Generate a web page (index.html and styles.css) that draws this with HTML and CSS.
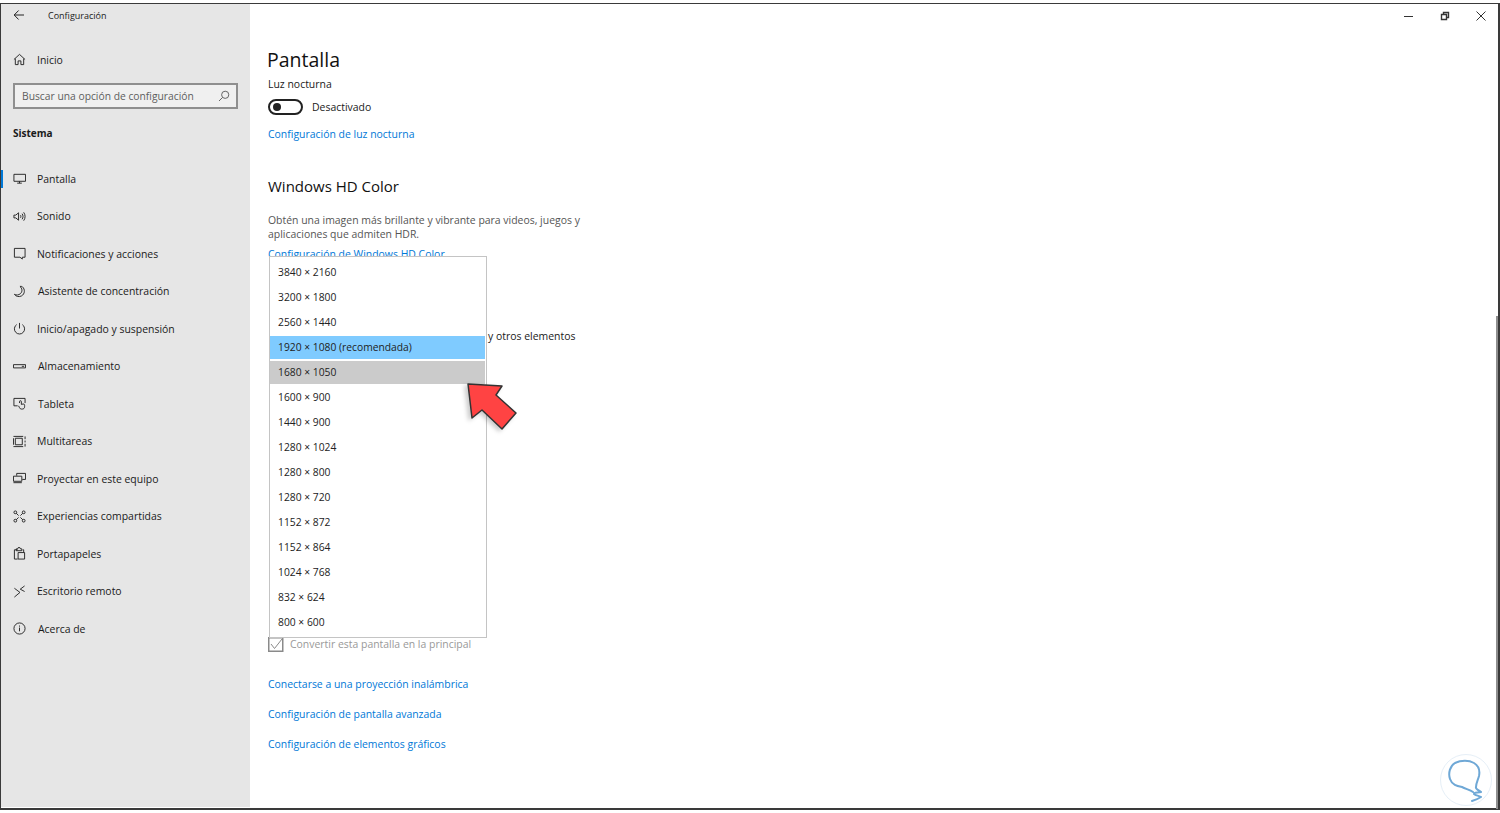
FILE: index.html
```html
<!DOCTYPE html>
<html lang="es">
<head>
<meta charset="utf-8">
<title>Configuración</title>
<link rel="stylesheet" href="styles.css">
</head>
<body>
<div class="window">
  <aside class="sidebar">
    <div class="titlebar">
      <svg class="back" width="12" height="12" viewBox="0 0 12 12"><path d="M11 6H1.2M5.6 1.500 1.200 6l4.400 4.500"/></svg>
      <span class="apptitle">Configuración</span>
    </div>
    <div class="nav-item home">
      <svg class="ico" viewBox="0 0 14 14"><path d="M1 7 7 1.500 13 7M2.500 6v6.500h3V8.500h3v4h3V6"/></svg>
      <span>Inicio</span>
    </div>
    <div class="search"><span>Buscar una opción de configuración</span>
      <svg width="12" height="12" viewBox="0 0 12 12"><circle cx="7.200" cy="4.800" r="3.600"/><path d="M4.600 7.400 1 11"/></svg>
    </div>
    <div class="section">Sistema</div>
    <nav class="nav">
      <div class="nav-item active">
        <svg class="ico" viewBox="0 0 14 14"><path d="M1 2.500h12.500v7.500H1zM4.500 12h5M7 10v2"/></svg>
        <span>Pantalla</span></div>
      <div class="nav-item">
        <svg class="ico" viewBox="0 0 14 14"><path d="M1 5.500h2L6 3v8L3 8.500H1zM8 5.500c.7.900.7 2.100 0 3M9.800 4c1.300 1.800 1.300 4.200 0 6M11.500 2.500c2 2.700 2 6.300 0 9"/></svg>
        <span>Sonido</span></div>
      <div class="nav-item">
        <svg class="ico" viewBox="0 0 14 14"><path d="M1.500 1.500h11.500v9.500H10V13L7.500 11H1.500z"/></svg>
        <span>Notificaciones y acciones</span></div>
      <div class="nav-item shift">
        <svg class="ico" viewBox="0 0 14 14"><path d="M7.500 1.500c2.500 2 3 5.500.5 7.800-1.800 1.700-4.500 1.900-6.500.7 1.500 2.500 5 3.200 7.800 1.700 3.500-2 4-7 .8-9.800C9.500 1.500 8.500 1.300 7.500 1.500z"/></svg>
        <span>Asistente de concentración</span></div>
      <div class="nav-item">
        <svg class="ico" viewBox="0 0 14 14"><path d="M7 1v6M4 2.800a5.500 5.500 0 1 0 6 0"/></svg>
        <span>Inicio/apagado y suspensión</span></div>
      <div class="nav-item shift">
        <svg class="ico" viewBox="0 0 14 14"><path d="M.5 5h13v3.500H.5zM9.500 6.800h2.500"/></svg>
        <span>Almacenamiento</span></div>
      <div class="nav-item shift">
        <svg class="ico" viewBox="0 0 14 14"><path d="M5 9.500H1V1.500h12v5M7 6.500v-1.500a1 1 0 0 1 2 0v3l2-.5c1 0 1.500.5 1.500 1.500v1.500c0 1.500-1 2.500-2.500 2.500H9c-1 0-1.500-.5-2-1.500L6 9.500"/></svg>
        <span>Tableta</span></div>
      <div class="nav-item">
        <svg class="ico" viewBox="0 0 14 14"><path d="M2.500 3.500h7.500v7H2.500zM.5 1.500h10.500M.5 12.500h10.500M.5 3.500v7M13 1.500v3M13 6v2M13 9.500v3"/></svg>
        <span>Multitareas</span></div>
      <div class="nav-item">
        <svg class="ico" viewBox="0 0 14 14"><path d="M4 4V1.500h9.500V8H10M.5 4.500h9V10h-9zM.5 11.500h9"/></svg>
        <span>Proyectar en este equipo</span></div>
      <div class="nav-item">
        <svg class="ico" viewBox="0 0 14 14"><path d="M3.500 3.500 6 6M10.500 3.500 8 6M3.500 10.500 6 8M10.500 10.500 8 8"/><circle cx="2.500" cy="2.500" r="1.500"/><circle cx="11.500" cy="2.500" r="1.500"/><circle cx="2.500" cy="11.500" r="1.500"/><circle cx="11.500" cy="11.500" r="1.500"/></svg>
        <span>Experiencias compartidas</span></div>
      <div class="nav-item">
        <svg class="ico" viewBox="0 0 14 14"><path d="M5 3H1.500v10H5M5.500 6h7v7h-7zM3.500 4V2h1.500a1.500 1.500 0 0 1 3 0h1.500v2zM10.500 3h1v3"/></svg>
        <span>Portapapeles</span></div>
      <div class="nav-item">
        <svg class="ico" viewBox="0 0 14 14"><path d="M1.500 13 7.500 8 1.500 3.500M12.500 1 7.800 4.500 12.500 7"/></svg>
        <span>Escritorio remoto</span></div>
      <div class="nav-item shift">
        <svg class="ico" viewBox="0 0 14 14"><circle cx="7" cy="7" r="6"/><path d="M7 6v4M7 3.800v1.200"/></svg>
        <span>Acerca de</span></div>
    </nav>
  </aside>

  <main class="content">
    <div class="controls">
      <svg width="10" height="10" viewBox="0 0 10 10"><path d="M0 5.500h9"/></svg>
      <svg width="10" height="10" viewBox="0 0 10 10"><path d="M1.500 3.500h5v5h-5zM3.500 3.500v-2h5v5h-2" class="thick"/></svg>
      <svg width="10" height="10" viewBox="0 0 10 10"><path d="M.5.500l9 9M9.500.500l-9 9"/></svg>
    </div>
    <h1>Pantalla</h1>
    <div class="label">Luz nocturna</div>
    <div class="toggle-row"><span class="toggle"><span class="knob"></span></span><span>Desactivado</span></div>
    <a class="link first">Configuración de luz nocturna</a>
    <h2>Windows HD Color</h2>
    <p class="desc">Obtén una imagen más brillante y vibrante para videos, juegos y aplicaciones que admiten HDR.</p>
    <a class="link hd">Configuración de Windows HD Color</a>
    <div class="scale">y otros elementos</div>
    <label class="check"><svg width="16" height="15" viewBox="0 0 16 15"><path class="box" d="M.75.750h14v13.500h-14z"/><path d="M3 7l3.500 4.500L14 2"/></svg><span>Convertir esta pantalla en la principal</span></label>
    <a class="link con">Conectarse a una proyección inalámbrica</a>
    <a class="link adv">Configuración de pantalla avanzada</a>
    <a class="link adv">Configuración de elementos gráficos</a>

    <ul class="dropdown">
      <li>3840 × 2160</li>
      <li>3200 × 1800</li>
      <li>2560 × 1440</li>
      <li class="selected">1920 × 1080 (recomendada)</li>
      <li class="hover">1680 × 1050</li>
      <li>1600 × 900</li>
      <li>1440 × 900</li>
      <li>1280 × 1024</li>
      <li>1280 × 800</li>
      <li>1280 × 720</li>
      <li>1152 × 872</li>
      <li>1152 × 864</li>
      <li>1024 × 768</li>
      <li>832 × 624</li>
      <li>800 × 600</li>
    </ul>

    <svg class="arrow" width="60" height="56" viewBox="0 0 60 56">
      <path class="arrow-fill" d="M8 6 42 8 36 17 56 35 42 51 22 32 12 40z"/>
    </svg>
    <div class="scrollbar"></div>
    <svg class="mark" width="54" height="54" viewBox="0 0 54 54">
      <circle class="ring" cx="27" cy="27" r="25.500"/>
      <path class="squiggle" d="M34 39c-3-2-7-3-11-5-5-1-10-2-12-8-2-6 0-13 5-16 6-3 14-3 19 0 5 3 6 8 5 13-1 4-3 7-3 11-1 2 4 4 5 5-3 1-7 0-7 2 0 1 6 2 7 3-3 2-6 3-9 4"/>
    </svg>
  </main>
</div>
</body>
</html>
```
FILE: styles.css
```css
* { box-sizing: border-box; }
html, body { margin: 0; height: 813px; background: #fff; overflow: hidden; }
body { padding-top: 3px; font-family: "Open Sans", "Noto Sans", sans-serif; font-size: 10.450px; color: #1a1a1a; }
.window { display: flex; width: 1500px; height: 807px; border-style: solid; border-color: #3a3a3a; border-width: 1.500px 2px 2px 1px; }
svg { fill: none; stroke: #222; stroke-width: 1; flex: none; }

.sidebar { width: 249px; flex: none; margin-bottom: 1px; background: #e6e6e6; display: flex; flex-direction: column; }
.titlebar { height: 22px; display: flex; align-items: center; padding-left: 12px; }
.apptitle { font-size: 9px; margin-left: 23px; }
.nav-item { display: flex; align-items: center; height: 37.500px; padding-left: 9px; gap: 11px; border-left: 3px solid transparent; }
.nav-item.home { height: 25px; margin-top: 21px; }
.nav-item.shift span { margin-left: 1px; }
.nav-item.active { position: relative; }
.nav-item.active::before { content: ""; position: absolute; left: -3px; top: 10px; width: 2px; height: 18px; background: #0078d7; }
.ico { width: 13px; height: 13px; }
.search { margin: 11px 12px 0 12px; height: 26px; border: 2px solid #8f8f8f; background: #f0f0f0; display: flex; align-items: center; justify-content: space-between; padding: 0 6px 0 7px; color: #5e5e5e; font-size: 10.300px; }
.search svg { stroke: #666; }
.section { margin: 16px 0 0 12px; font-weight: 700; font-size: 10px; line-height: 16px; }
.nav { margin-top: 19px; }

.content { flex: 1; position: relative; padding: 0 0 0 18px; display: flex; flex-direction: column; align-items: flex-start; }
.controls { position: absolute; top: 6.500px; right: 12px; display: flex; gap: 26px; }
.controls svg { stroke: #333; }
.controls .thick { stroke-width: 1.400; }
h1 { font-weight: 400; font-size: 19.500px; line-height: 28px; margin: 42px 0 0 -1px; color: #111; }
.label { line-height: 16px; margin-top: 2px; }
.toggle-row { display: flex; align-items: center; gap: 9px; margin-top: 7px; height: 16px; }
.toggle { width: 35px; height: 16px; border: 2px solid #222; border-radius: 8px; display: flex; align-items: center; padding-left: 3px; }
.knob { width: 8px; height: 8px; border-radius: 50%; background: #222; }
.link { color: #0078d7; line-height: 16px; display: block; font-weight: 500; }
.link.first { margin-top: 11px; }
h2 { font-weight: 400; font-size: 15px; line-height: 22px; margin: 33px 0 0; color: #111; }
.desc { margin: 16px 0 0; width: 330px; line-height: 14px; color: #555; }
.link.hd { margin-top: 5px; }
.scale { margin: 66px 0 0 220px; line-height: 16px; }
.check { display: flex; align-items: center; gap: 6px; margin-top: 292px; color: #999; height: 16px; }
.check svg { stroke: #8a8a8a; }
.check .box { stroke-width: 1.500; }
.link.con { margin-top: 24px; }
.link.adv { margin-top: 14px; }

.dropdown { position: absolute; left: 19px; top: 252px; width: 218px; height: 382px; margin: 0; padding: 3px 1px 2px 0; list-style: none; background: #fff; border: 1px solid #c4c4c4; font-size: 10.300px; }
.dropdown li { height: 25px; padding: 0 0 2px 8px; display: flex; align-items: center; color: #222; border-top: 1px solid transparent; border-bottom: 1px solid transparent; background-clip: padding-box; }
.selected { background-color: #7fcbff; }
.hover { background-color: #cbcbcb; }

.arrow { position: absolute; left: 210px; top: 373.500px; stroke: none; filter: drop-shadow(-3px 2px 2px rgba(0,0,0,.2)); }
.arrow-fill { fill: #ff4343; stroke: #333; stroke-width: 1.500; stroke-linejoin: round; }
.scrollbar { position: absolute; right: 0; top: 311.500px; height: 493px; width: 2px; background: #8f8f8f; }
.mark { position: absolute; left: 1189px; top: 749px; }
.ring { stroke: #e6eff7; stroke-width: 1; }
.squiggle { stroke: #6fa8d6; stroke-width: 2; stroke-linecap: round; stroke-linejoin: round; }
```
